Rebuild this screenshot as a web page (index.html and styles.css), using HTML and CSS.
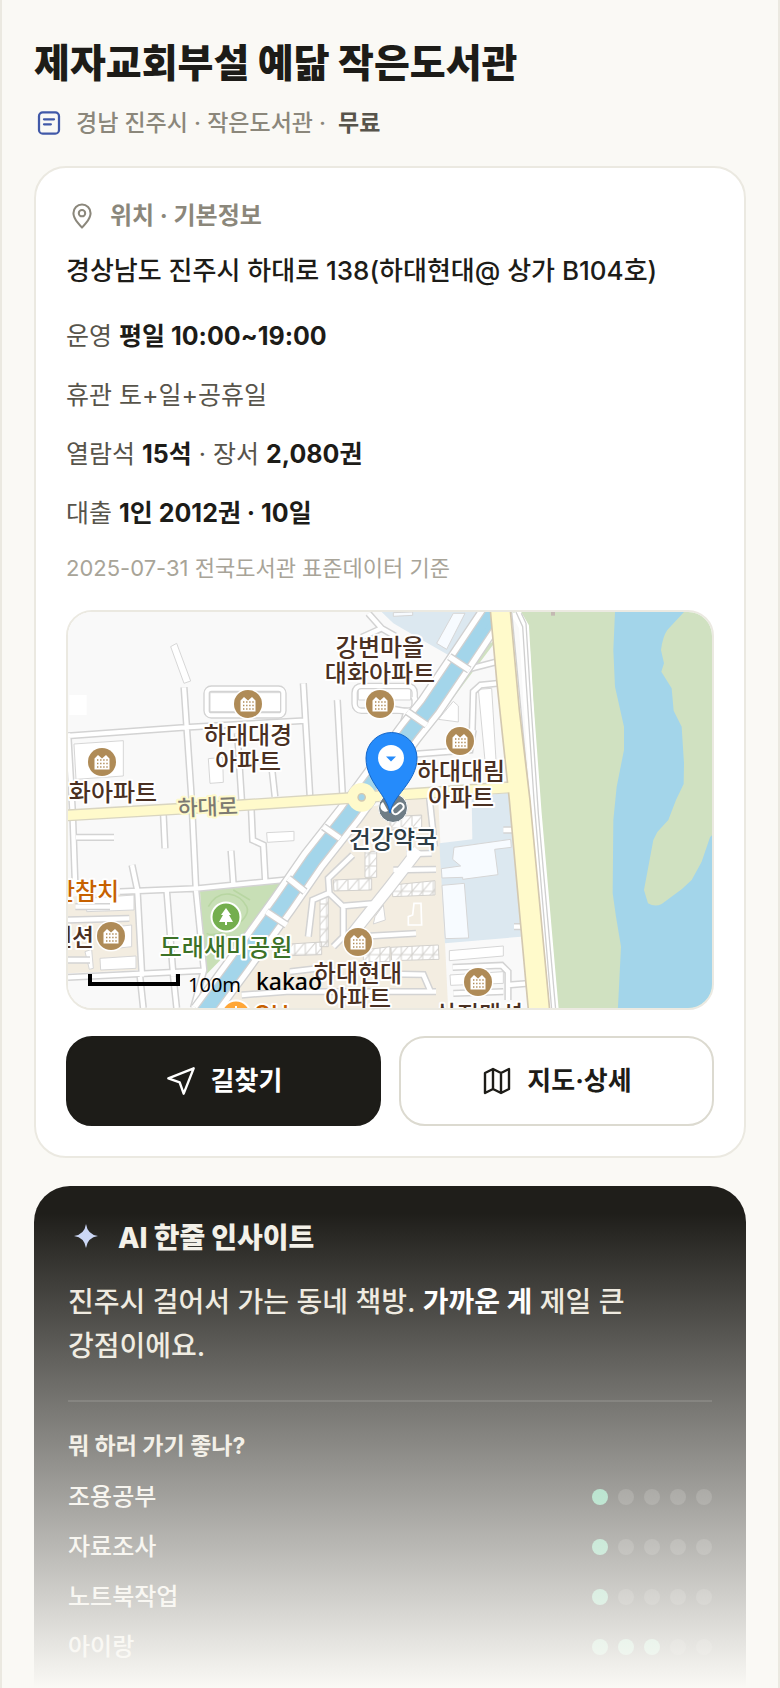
FILE: index.html
```html
<!DOCTYPE html>
<html lang="ko">

<head>
	<meta charset="utf-8">
	<meta name="viewport" content="width=device-width, initial-scale=1.0">
	<title>제자교회부설 예닮 작은도서관</title>
	<link rel="stylesheet" href="styles.css">
</head>

<body>
	<main class="page">
		<header class="top">
			<h1>제자교회부설 예닮 작은도서관</h1>
			<p class="meta">
				<svg class="icon-doc" viewBox="0 0 24 24"><rect x="4" y="3.5" width="16" height="17" rx="3" /><path d="M8 9h8M8 13h5.5" /></svg>
				<span>경남 진주시 · 작은도서관 ·</span>
				<strong>무료</strong>
			</p>
		</header>

		<section class="card">
			<h2 class="card-title">
				<svg class="icon-pin" viewBox="-2 -2 28 28"><path d="M12 22s7.500-7 7.500-12.500a7.500 7.500 0 0 0-15 0C4.500 15 12 22 12 22z" /><circle cx="12" cy="9.500" r="2.800" /></svg>
				위치 · 기본정보
			</h2>
			<p class="address">경상남도 진주시 하대로 138(하대현대@ 상가 B104호)</p>
			<ul class="info">
				<li>운영 <b>평일 10:00~19:00</b></li>
				<li>휴관 토+일+공휴일</li>
				<li>열람석 <b>15석</b> · 장서 <b>2,080권</b></li>
				<li>대출 <b>1인 2012권 · 10일</b></li>
			</ul>
			<p class="source">2025-07-31 전국도서관 표준데이터 기준</p>

			<div class="map">
				<svg viewBox="0 0 644 396" preserveAspectRatio="xMidYMid slice">
					<defs>
						<pattern id="lots" width="32" height="38" patternUnits="userSpaceOnUse">
							<rect width="32" height="38" fill="#fff" />
							<path d="M0 0H32V38H0ZM0 38L32 0" fill="none" stroke="#d3d1cd" stroke-width="3" />
						</pattern>
						<g id="apt">
							<circle r="15.500" fill="#fff" />
							<circle r="14" fill="#af8b57" />
							<path d="M-7.500 7.500V-3.500L-4 -7L0 -3.500L4 -7L7.500 -3.500V7.500Z" fill="#fff" />
							<path d="M-5 -2H6M-5 1.500H6M-5 5H6" stroke="#af8b57" stroke-width="1.400" stroke-dasharray="1.400 1.700" />
						</g>
						<g id="roads">
							<path d="M20 408L375 382L735 362M372 262L395 600L408 870L432 1110L400 1224M730 250L750 590M832 300L848 590M532 400L545 600M635 500L645 590M24 400L38 640L46 870M310 640L315 745M48 712H162M216 795L232 870L246 1130M320 870L340 1130M180 875L415 865L690 838M574 630L578 720L610 735L616 845M513 752L520 850M24 1132L432 1112M24 960L208 955M240 1130L250 1224M340 1130L350 1224M24 1080H90M46 920H150" />
							<path d="M878 765L805 835L808 880L850 920L850 1010L820 1040M805 880L758 900L745 1010M850 918L940 910M1000 810L1128 808M1040 762L1115 760M1108 590L1124 740M930 1008L1068 1000M545 1185L680 1175L1128 1175M690 1115L820 1100M990 1122L1090 1124L1112 1175" />
							<path d="M1236 420L1240 275L1262 255L1312 250M1185 195L1215 210L1312 185M925 40L965 85L905 112M965 85L1005 108M1070 462L1230 450L1240 390M1060 290L1080 320M990 325L1040 335L1020 400M1178 1102L1325 1096L1344 1115L1344 1200M1344 1155L1405 1150M1180 1180L1330 1175M1330 690H1362M1362 980H1390" />
						</g>
					</defs>

					<!-- land, water and roads -->
					<g transform="translate(-8 -12) scale(.33333)">
						<rect x="-600" y="-600" width="3200" height="2600" fill="#f9f9f9" />
						<path d="M930 620L1110 590L1135 600L1165 1240H430ZM24 890L225 880L240 1110L24 1120Z" fill="#f3ede1" />
						<path d="M965 36H1290L1165 165L1060 105L1000 70ZM1235 590L1345 578L1362 740L1383 1010L1155 1030L1138 730L1237 718Z" fill="#dce8f0" />
						<path d="M420 870L670 850L590 970L432 1130Z" fill="#c8dfb6" />
						<path d="M445 920C480 860 540 880 560 920S470 1020 440 1000M520 870L570 900" fill="none" stroke="#b8d6a2" stroke-width="5" />
						<path d="M1310 120L1070 440L1060 410L1290 130Z" fill="#d0e1c1" />
						<path d="M1358 36H2600V1240H1488L1438 700L1425 400L1410 150L1396 60Z" fill="#d0e1c1" />
						<path d="M1665 36L1660 150L1665 260L1692 380V450L1670 560L1660 660L1658 880L1668 950L1683 1040L1673 1240H2600V706H1956L1950 712L1925 785L1895 840L1865 868L1805 912Q1785 922 1764 910L1752 870L1780 720L1792 696L1825 660L1848 600L1871 552L1872 490L1865 380L1841 332L1835 265L1804 215L1812 190L1803 150Q1808 110 1822 90L1872 36Z" fill="#a3d5ea" />

						<!-- buildings -->
						<g fill="#fff" stroke="#d6d6d6" stroke-width="3">
							<path d="M332 140L350 130L392 243L372 250ZM42 432L190 422V528L48 538ZM445 476L488 472L490 547L450 550Z" />
							<path d="M450 278H662V335H450ZM895 265H1052V300H895ZM1255 268L1295 265L1308 480L1275 482ZM1135 358L1180 304L1195 318V366Z" />
							<path d="M28 285H80V345H28Z" stroke="none" />
							<path d="M620 698L702 694V722L622 727ZM80 895L222 885V930L80 935ZM120 1075L228 1068V1105L122 1110ZM75 1055L95 1048L100 1105L88 1108ZM170 980L215 975V1040L170 1045Z" />
							<path d="M1130 130L1180 40H1215L1160 148ZM1000 38L1058 36V46L1000 49Z" fill="#f7fbff" />
							<path d="M1182 742L1352 718L1354 742L1304 748L1314 824L1208 838V832L1146 834L1144 806L1202 798L1178 778ZM1146 856L1213 850L1226 1014L1156 1016Z" fill="#f7fbff" />
							<path d="M1168 1052L1330 1038V1068L1168 1082ZM1170 1125L1330 1115V1150L1172 1156ZM945 950L970 915L976 960L940 972Z" />
							<path d="M1062 910H1083L1085 975H1045V950L1058 945Z" fill="none" stroke="#fff" stroke-width="5" />
						</g>
						<g fill="url(#lots)" stroke="#d3d1cd" stroke-width="3">
							<path d="M820 840L935 835V870L822 873ZM998 855L1125 842V885L998 890ZM992 1042L1135 1035L1137 1078L995 1082ZM690 1032L785 1026V1064L692 1067ZM780 890H805V1040H780ZM915 755H950V832H915ZM990 650L1085 645V682L990 690ZM910 1050L990 1040V1085H910Z" />
						</g>

						<!-- side streets -->
						<use href="#roads" fill="none" stroke="#d3d3d3" stroke-width="22" />
						<rect x="440" y="266" width="230" height="80" rx="14" fill="none" stroke="#d3d3d3" stroke-width="20" />
						<rect x="884" y="258" width="180" height="74" rx="20" fill="none" stroke="#d3d3d3" stroke-width="20" />
						<path d="M1075 750L990 860L870 1010" fill="none" stroke="#d3d3d3" stroke-width="38" />
						<path d="M1075 750L990 860L870 1010" fill="none" stroke="#fff" stroke-width="31" />
						<use href="#roads" fill="none" stroke="#fff" stroke-width="13" />
						<rect x="440" y="266" width="230" height="80" rx="14" fill="none" stroke="#fff" stroke-width="12" />
						<rect x="884" y="258" width="180" height="74" rx="20" fill="none" stroke="#fff" stroke-width="12" />

						<!-- canal with a road on both banks -->
						<g fill="none">
							<path d="M1312 20L1215 165L1110 320L1050 395L905 592L870 640L760 780L670 910L540 1090L430 1240" stroke="#d0d0d0" stroke-width="88" />
							<path d="M1312 20L1215 165L1110 320L1050 395L905 592L870 640L760 780L670 910L540 1090L430 1240" stroke="#fff" stroke-width="80" />
							<path d="M1312 20L1215 165L1110 320L1050 395L905 592L870 640L760 780L670 910L540 1090L430 1240" stroke="#d0d0d0" stroke-width="48" />
							<path d="M1312 20L1215 165L1110 320L1050 395L905 592L870 640L760 780L670 910L540 1090L430 1240" stroke="#a3d5ea" stroke-width="40" />
							<path d="M1168 170L1228 210M1042 335L1100 375M790 680L840 715M685 835L735 875M620 935L680 975" stroke="#d0d0d0" stroke-width="24" />
							<path d="M1168 170L1228 210M1042 335L1100 375M790 680L840 715M685 835L735 875M620 935L680 975" stroke="#fff" stroke-width="16" />
							<path d="M1290 36L1250 90V120L1310 36Z" fill="#a3d5ea" />
						</g>

						<!-- main roads -->
						<g fill="none">
							<path d="M1366 36L1392 80L1405 300L1430 640L1482 1240" stroke="#fff" stroke-width="30" />
							<path d="M1355 36L1380 300L1412 640L1466 1240M1368 36L1388 80L1398 240L1422 600L1476 1240M1384 40L1398 70L1412 300L1435 640L1488 1240" stroke="#d0d0d0" stroke-width="4" />
							<path d="M-500 668L24 646L540 616L905 592L1350 562" stroke="#d9d5c0" stroke-width="36" />
						</g>
						<path d="M1290 20H1350L1378 330L1410 600L1470 1240H1406L1348 600L1310 240Z" fill="#fffacb" stroke="#d3c8b0" stroke-width="5" />
						<path d="M-500 668L24 646L540 616L905 592L1360 562" fill="none" stroke="#fffacb" stroke-width="28" />
						<circle cx="905" cy="592" r="27" fill="none" stroke="#fffacb" stroke-width="32" />
						<circle cx="905" cy="592" r="11" fill="#a3d5ea" stroke="#d3c8b0" stroke-width="4" />
						<rect x="1473" y="36" width="12" height="11" fill="#c4b9b3" />
					</g>

					<!-- places -->
					<use href="#apt" x="180" y="92" />
					<use href="#apt" x="312" y="92" />
					<use href="#apt" x="34" y="150" />
					<use href="#apt" x="392" y="129" />
					<use href="#apt" x="43" y="324" />
					<use href="#apt" x="290" y="330" />
					<use href="#apt" x="410" y="370" />
					<circle cx="158" cy="305" r="14.500" fill="#74ae4e" stroke="#fff" stroke-width="2" />
					<path d="M158 296L163 303H161L165 310H159V313H157V310H151L155 303H153Z" fill="#fff" />
					<circle cx="168" cy="403" r="14.500" fill="#ffa637" stroke="#fff" stroke-width="2" />
					<path d="M168 394v8" stroke="#fff" stroke-width="2" />
					<circle cx="325" cy="196" r="14.500" fill="#6f7d86" stroke="#fff" stroke-width="1" />
					<rect x="323" y="193" width="13" height="7" rx="3.500" transform="rotate(-42 330 196)" fill="none" stroke="#fff" stroke-width="2" />
					<path d="M315 190a5 5 0 0 0 5 9z" fill="#fff" />

					<g class="place">
						<text x="312" y="44">강변마을</text>
						<text x="312" y="70">대화아파트</text>
						<text x="180" y="132">하대대경</text>
						<text x="180" y="158">아파트</text>
						<text x="45" y="189">화아파트</text>
						<text x="393" y="168">하대대림</text>
						<text x="393" y="194">아파트</text>
						<text x="4" y="334">맨션</text>
						<text x="290" y="370">하대현대</text>
						<text x="290" y="395">아파트</text>
						<text x="411" y="411">삼진맨션</text>
						<text class="food" x="18" y="288">한참치</text>
						<text class="food" x="203" y="411">CU</text>
						<text class="park" x="158" y="344">도래새미공원</text>
						<text class="shop" x="325" y="236">건강약국</text>
						<text class="road" x="140" y="203" transform="rotate(-2 140 203)">하대로</text>
					</g>

					<!-- marker -->
					<path d="M322 201C320 184 298 170 298 146A25.500 25.500 0 0 1 349 146C349 170 324 184 322 201Z" fill="#258bfb" stroke="#1566c8" stroke-width="1" />
					<circle cx="323" cy="146" r="13" fill="#fff" />
					<path d="M318 144.500H328L323 149.500Z" fill="#258bfb" />

					<path d="M22 362V372H110V362" fill="none" stroke="#000" stroke-width="4" />
					<text class="scale" x="120" y="380">100m</text>
					<text class="brand" x="188" y="378">kakao</text>
				</svg>
			</div>

			<div class="actions">
				<button class="btn dark" type="button">
					<svg viewBox="0 0 24 24"><path d="M21.500 2.500L14 21.500l-3-8.500-8.500-3z" /></svg>
					길찾기
				</button>
				<button class="btn" type="button">
					<svg viewBox="0 0 24 24"><path d="M3 6l6-3 6 3 6-3v15l-6 3-6-3-6 3zM9 3v15M15 6v15" /></svg>
					지도·상세
				</button>
			</div>
		</section>

		<section class="insight">
			<h2 class="insight-title">
				<svg viewBox="0 0 36 36"><path d="M18 4Q19.500 14.500 30 16Q19.500 17.500 18 28Q16.500 17.500 6 16Q16.500 14.500 18 4Z" /></svg>
				AI 한줄 인사이트
			</h2>
			<p class="lead">진주시 걸어서 가는 동네 책방. <b>가까운 게</b> 제일 큰 강점이에요.</p>
			<h3>뭐 하러 가기 좋나?</h3>
			<ul class="scores">
				<li>조용공부 <span class="dots"><i class="on"></i><i></i><i></i><i></i><i></i></span></li>
				<li>자료조사 <span class="dots"><i class="on"></i><i></i><i></i><i></i><i></i></span></li>
				<li>노트북작업 <span class="dots"><i class="on"></i><i></i><i></i><i></i><i></i></span></li>
				<li>아이랑 <span class="dots"><i class="on"></i><i class="on"></i><i class="on"></i><i></i><i></i></span></li>
			</ul>
		</section>
		<div class="fade"></div>
	</main>
</body>

</html>
```

FILE: styles.css
```css
* {
	box-sizing: border-box;
}

body,
h1,
h2,
h3,
p,
ul {
	margin: 0;
	padding: 0;
}

body {
	background-color: #faf9f5;
	color: #1d1c18;
	font-family: Inter, "Noto Sans CJK KR", sans-serif;
	font-size: 24px;
	font-weight: 500;
}

ul {
	list-style: none;
}

svg {
	flex: none;
}

.page {
	position: relative;
	padding: 36px 32px 0;
	border: solid #ebe9e1;
	border-width: 0 2px;
}

h1 {
	font-size: 39px;
	line-height: 54px;
	font-weight: 800;
}

.meta {
	display: flex;
	align-items: center;
	gap: 12px;
	margin: 14px 0 24px;
	font-size: 23px;
	line-height: 38px;
	color: #8b877b;
}

.meta strong {
	color: #57544b;
	font-weight: 700;
}

.icon-doc {
	width: 30px;
	height: 30px;
	fill: none;
	stroke: #4159a8;
	stroke-width: 1.8;
	stroke-linecap: round;
}

.card {
	background-color: #fff;
	border: 2px solid #ebe9e1;
	border-radius: 32px;
	padding: 30px;
}

.card-title {
	display: flex;
	align-items: center;
	gap: 12px;
	font-size: 24px;
	line-height: 36px;
	font-weight: 700;
	color: #8b877b;
}

.icon-pin {
	width: 32px;
	height: 32px;
	fill: none;
	stroke: #8b877b;
	stroke-width: 1.8;
}

.address {
	margin-top: 16px;
	font-size: 26px;
	line-height: 42px;
}

.info {
	display: flex;
	flex-direction: column;
	gap: 15px;
	margin-top: 22px;
	font-size: 25px;
	font-weight: 400;
	line-height: 44px;
	color: #57544b;
}

.info b {
	color: #1d1c18;
	font-weight: 700;
}

.source {
	margin-top: 15px;
	font-size: 22px;
	font-weight: 400;
	line-height: 36px;
	color: #a8a498;
}

.map {
	margin-top: 24px;
	border: 2px solid #ebe9e1;
	border-radius: 26px;
	overflow: hidden;
}

.map svg {
	display: block;
	width: 100%;
	height: 396px;
}

.place text {
	font-size: 24px;
	font-weight: 500;
	text-anchor: middle;
	fill: #4a3022;
	stroke: #fff;
	stroke-width: 4px;
	stroke-linejoin: round;
	paint-order: stroke;
}

.place .food {
	fill: #c76100;
}

.place .park {
	fill: #3c7227;
}

.place .shop {
	fill: #2d3c45;
}

.place .road {
	font-size: 22px;
	fill: #7d7a72;
	stroke: #fffacb;
}

.scale {
	font-family: "Noto Sans", sans-serif;
	font-size: 20px;
	font-weight: 400;
}

.brand {
	font-family: "Noto Sans", sans-serif;
	font-size: 23px;
	font-weight: 500;
}

.actions {
	display: flex;
	gap: 18px;
	margin-top: 26px;
}

.btn {
	flex: 1;
	display: flex;
	align-items: center;
	justify-content: center;
	gap: 14px;
	height: 90px;
	border: 2px solid #dcdad0;
	border-radius: 26px;
	background-color: #fff;
	color: #1d1c18;
	font-family: inherit;
	font-size: 26px;
	font-weight: 700;
	line-height: 34px;
}

.btn svg {
	width: 32px;
	height: 32px;
	fill: none;
	stroke: currentColor;
	stroke-width: 1.8;
	stroke-linejoin: round;
}

.btn.dark {
	background-color: #1d1c18;
	border-color: #1d1c18;
	color: #fff;
}

.insight {
	margin-top: 28px;
	padding: 32px 34px 16px;
	border-radius: 36px 36px 0 0;
	background-color: #1f1e1a;
	color: #f3f0e8;
}

.insight-title {
	display: flex;
	align-items: center;
	gap: 14px;
	font-size: 28px;
	line-height: 40px;
	font-weight: 800;
}

.insight-title svg {
	width: 36px;
	height: 36px;
	fill: #c9d5f5;
}

.lead {
	margin-top: 22px;
	padding-bottom: 32px;
	border-bottom: 2px solid #3a3935;
	font-size: 28px;
	line-height: 44px;
	word-break: keep-all;
	color: #ece7dc;
}

.lead b {
	color: #fff;
	font-weight: 700;
}

h3 {
	margin: 27px 0 9px;
	font-size: 23px;
	line-height: 34px;
	font-weight: 700;
	color: #ece7dc;
}

.scores li {
	display: flex;
	align-items: center;
	justify-content: space-between;
	height: 50px;
	line-height: 34px;
}

.dots {
	display: flex;
	gap: 10px;
}

.dots i {
	width: 16px;
	height: 16px;
	border-radius: 50%;
	background-color: #403f3b;
}

.dots .on {
	background-color: #63c79b;
}

/* content fades out towards the bottom */
.fade {
	position: absolute;
	left: 0;
	right: 0;
	bottom: 0;
	height: 475px;
	background: linear-gradient(rgba(250, 249, 245, 0), #faf9f5);
	pointer-events: none;
}
```
